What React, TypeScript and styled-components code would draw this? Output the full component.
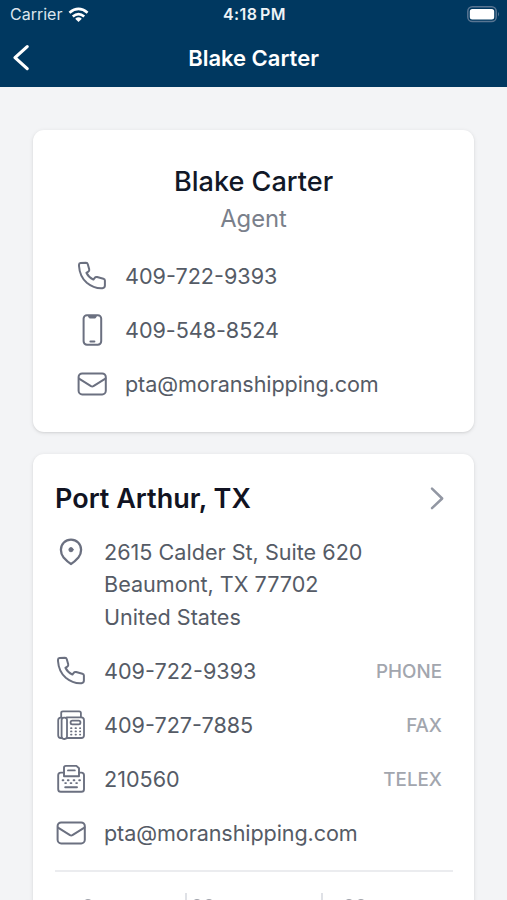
import React from "react";
import styled, { createGlobalStyle } from "styled-components";

const GlobalStyle = createGlobalStyle`
  * { box-sizing: border-box; }
  body { margin: 0; background: #f3f4f6; overflow: hidden; font-family: Inter, sans-serif; }
  svg { display: block; }
`;

const Screen = styled.div`
  width: 507px;
  height: 900px;
  overflow: hidden;
  background: #f3f4f6;
`;

const Header = styled.header`
  height: 87px;
  background: #003860;
  color: #fff;
`;

const StatusBar = styled.div`
  height: 29px;
  padding: 0 7px 0 10px;
  display: grid;
  grid-template-columns: 1fr auto 1fr;
  align-items: center;
  font-size: 16px;
  line-height: 29px;
`;

const Carrier = styled.div`
  display: flex;
  align-items: center;
  gap: 6px;
  color: #dbe5ed;
`;

const Clock = styled.div`
  font-weight: 600;
  font-size: 16px;
  letter-spacing: 0.35px;
  word-spacing: -1.5px;
  color: #eef3f7;
  padding-right: 1px;
`;

const BatterySlot = styled.div`
  justify-self: end;
`;

const NavBar = styled.div`
  height: 57px;
  padding: 0 12px;
  display: grid;
  grid-template-columns: 40px 1fr 40px;
  align-items: center;
`;

const NavTitle = styled.div`
  text-align: center;
  font-size: 22px;
  font-weight: 600;
`;

const Content = styled.main`
  padding: 43px 33px 0 33px;
  display: flex;
  flex-direction: column;
  gap: 22px;
`;

const Card = styled.section`
  background: #fff;
  border-radius: 11px;
  box-shadow: 0 1px 4px rgba(0, 0, 0, 0.1), 0 1px 2px rgba(0, 0, 0, 0.06);
`;

const ProfileCard = styled(Card)`
  height: 302px;
  padding: 33px 43px 0;
`;

const OfficeCard = styled(Card)`
  height: 500px;
  padding: 22px 21px 0 22px;
`;

const PersonName = styled.h1`
  margin: 0;
  text-align: center;
  font-size: 27.1px;
  font-weight: 500;
  line-height: 38px;
  color: #111827;
`;

const Role = styled.div`
  text-align: center;
  font-size: 23.8px;
  line-height: 36px;
  color: #7a808b;
`;

const ProfileRows = styled.div`
  padding-top: 12px;
`;

const Row = styled.div`
  display: flex;
  align-items: center;
  height: 54px;
  padding-right: 11px;
`;

const AddressRow = styled(Row)`
  align-items: flex-start;
  height: 108px;
`;

const IconSlot = styled.div`
  width: 49px;
  flex: none;
  color: #6b7080;
`;

const Value = styled.div<{ $spacing?: string }>`
  flex: 1;
  font-size: 21.6px;
  line-height: 32.4px;
  letter-spacing: ${(p) => p.$spacing ?? "0"};
  color: #555b66;
`;

const Kind = styled.div`
  font-size: 18.8px;
  font-weight: 500;
  color: #a2a6ae;
`;

const OfficeHeading = styled.div`
  display: flex;
  align-items: center;
  justify-content: space-between;
  height: 44px;
  padding-right: 8px;
  margin-bottom: 16px;
  color: #9297a3;
`;

const OfficeTitle = styled.h2`
  margin: 0;
  font-size: 27px;
  font-weight: 600;
  color: #111322;
`;

const Actions = styled.div`
  display: grid;
  grid-template-columns: 130px 136px 1fr;
  margin-top: 10px;
  border-top: 2px solid #ebecef;
  padding-top: 21px;
`;

const Action = styled.div<{ $inset: number }>`
  height: 40px;
  padding: 6px 0 0 ${(p) => p.$inset}px;
  color: #a0a3ab;
  & + & { border-left: 2px solid #dfe1e6; }
`;

const line = {
  fill: "none",
  stroke: "currentColor",
  strokeWidth: 2,
  strokeLinecap: "round" as const,
  strokeLinejoin: "round" as const,
};

const PhoneIcon = () => (
  <svg width="32" height="32" viewBox="0 0 32 32" {...line}>
    <path d="M3 4.8Q3 3.2 4.6 3L10 2.8Q11.4 2.8 11.8 4.2L13.2 9.3Q13.6 10.8 12.3 11.6L10.4 12.8Q12.6 17.4 17.4 19.6L18.7 17.9Q19.6 16.6 21.1 17L27.4 18.7Q28.9 19.1 28.9 20.6V25.6Q28.9 28 26.4 28.3Q18 28.8 10.8 22.8Q3.7 16.6 3 6Z" />
  </svg>
);

const MobileIcon = () => (
  <svg width="32" height="32" viewBox="0 0 32 32" {...line}>
    <rect x="7.6" y="1.2" width="17.6" height="29.5" rx="3.4" />
    <path d="M12.4 2L13.4 4H19.4L20.4 2" fill="currentColor" strokeWidth="1" />
    <path d="M14.4 27.5H18.4" />
  </svg>
);

const MailIcon = () => (
  <svg width="32" height="32" viewBox="0 0 32 32" {...line}>
    <rect x="2.6" y="5.4" width="27.2" height="21" rx="3.6" />
    <path d="M3 10.6L15 18.2Q16.2 18.9 17.4 18.2L29.4 10.6" />
  </svg>
);

const PinIcon = () => (
  <svg width="32" height="32" viewBox="0 0 32 32" {...line} strokeWidth={2.3}>
    <path d="M16 28Q12.8 26.2 8.6 21.5Q5.9 18.1 5.9 13.7A10.1 10.1 0 0 1 26.1 13.7Q26.1 18.1 23.4 21.5Q19.2 26.2 16 28Z" />
    <circle cx="16" cy="13.7" r="2.1" fill="currentColor" strokeWidth="1" />
  </svg>
);

const FaxIcon = () => (
  <svg width="32" height="32" viewBox="0 0 32 32" {...line} strokeWidth={1.8}>
    <path d="M6.2 8V4Q6.2 2.3 7.9 2.3H24.2Q25.9 2.3 25.9 4V8" />
    <path d="M11.5 8.4H26.2Q29 8.4 29 11.2V26.2Q29 29 26.2 29H11.5" />
    <path d="M7 8.6H5.8Q3.2 8.6 3.2 11.2V26.2Q3.2 29 5.8 29H7" />
    <rect x="6.6" y="8.6" width="5.4" height="21.4" rx="2.4" />
    <rect x="15.6" y="11.6" width="9.8" height="3.8" rx="1.6" />
    <path d="M16 19.2h.5M20.5 19.2h.5M25 19.2h.2M16 22.4h.5M20.5 22.4h.5M25 22.4h.2M16 25.6h.5M20.5 25.6h.5M25 25.6h.2" />
  </svg>
);

const TelexIcon = () => (
  <svg width="32" height="32" viewBox="0 0 32 32" {...line} strokeWidth={1.9}>
    <path d="M9 13.2V4.8Q9 2.9 10.9 2.9H21.4L24 5.2V13.2Z" />
    <path d="M13 7.4H19.8" />
    <path d="M9 9.6H5.8Q3.2 9.6 3.2 12.2V26.2Q3.2 28.8 5.8 28.8H26.4Q29 28.8 29 26.2V12.2Q29 9.6 26.4 9.6H24" />
    <path d="M7.6 17.2h.8M12.8 17.2h.8M18.6 17.2h.8M24.2 17.2h.8M10.2 20.1h.8M15.6 20.1h.8M21.2 20.1h.8M10.2 24.2H22" />
  </svg>
);

const BackIcon = () => (
  <svg width="20" height="30" viewBox="0 0 20 30" {...line} strokeWidth={3.2}>
    <path d="M15.2 3.6L3 14.6L15.2 25.6" />
  </svg>
);

const ForwardIcon = () => (
  <svg width="16" height="26" viewBox="0 0 16 26" {...line} strokeWidth={2.5}>
    <path d="M3 3.7L13.2 13.5L3 23.2" />
  </svg>
);

const WifiIcon = () => (
  <svg width="21" height="16" viewBox="0 0 22 16" fill="none" stroke="#fff" strokeWidth="2.8">
    <path d="M1.5 5.7Q11-2.3 20.5 5.7M5 9.5Q11 4.5 17 9.5" />
    <path d="M7.5 12Q11 8.9 14.5 12L11 15.3Z" fill="#fff" stroke="none" />
  </svg>
);

const BatteryIcon = () => (
  <svg width="33" height="17" viewBox="0 0 33 17">
    <rect x="0.8" y="0.8" width="28.4" height="14.8" rx="4.6" fill="none" stroke="#587592" strokeWidth="1.5" />
    <rect x="2.8" y="3" width="24.4" height="10.5" rx="2.5" fill="#fff" />
    <path d="M31 6Q33 8.2 31 10.4Z" fill="#587592" />
  </svg>
);

const PersonIcon = () => (
  <svg width="24" height="24" viewBox="0 0 24 24" {...line}>
    <circle cx="12" cy="5" r="4" />
    <path d="M4 23v-4q0-4 4-4h8q4 0 4 4v4" />
  </svg>
);

const PairIcon = () => (
  <svg width="24" height="24" viewBox="0 0 24 24" {...line}>
    <circle cx="6" cy="5" r="4" />
    <circle cx="18" cy="5" r="4" />
    <path d="M2 20v-5h8v5M14 20v-5h8v5" />
  </svg>
);

const contacts = [
  { icon: <PhoneIcon />, value: "409-722-9393", kind: "PHONE" },
  { icon: <FaxIcon />, value: "409-727-7885", kind: "FAX" },
  { icon: <TelexIcon />, value: "210560", kind: "TELEX" },
  { icon: <MailIcon />, value: "pta@moranshipping.com", kind: "" },
];

export default function App() {
  return (
    <Screen>
      <GlobalStyle />
      <Header>
        <StatusBar>
          <Carrier>Carrier <WifiIcon /></Carrier>
          <Clock>4:18 PM</Clock>
          <BatterySlot><BatteryIcon /></BatterySlot>
        </StatusBar>
        <NavBar>
          <BackIcon />
          <NavTitle>Blake Carter</NavTitle>
        </NavBar>
      </Header>
      <Content>
        <ProfileCard>
          <PersonName>Blake Carter</PersonName>
          <Role>Agent</Role>
          <ProfileRows>
            <Row><IconSlot><PhoneIcon /></IconSlot><Value>409-722-9393</Value></Row>
            <Row><IconSlot><MobileIcon /></IconSlot><Value $spacing="-0.05px">409-548-8524</Value></Row>
            <Row><IconSlot><MailIcon /></IconSlot><Value $spacing="-0.1px">pta@moranshipping.com</Value></Row>
          </ProfileRows>
        </ProfileCard>
        <OfficeCard>
          <OfficeHeading>
            <OfficeTitle>Port Arthur, TX</OfficeTitle>
            <ForwardIcon />
          </OfficeHeading>
          <AddressRow>
            <IconSlot><PinIcon /></IconSlot>
            <Value>2615 Calder St, Suite 620<br />Beaumont, TX 77702<br />United States</Value>
          </AddressRow>
          {contacts.map((c) => (
            <Row key={c.value}>
              <IconSlot>{c.icon}</IconSlot>
              <Value $spacing={c.kind ? "0" : "-0.1px"}>{c.value}</Value>
              {c.kind && <Kind>{c.kind}</Kind>}
            </Row>
          ))}
          <Actions>
            <Action $inset={21}><PersonIcon /></Action>
            <Action $inset={4}><PairIcon /></Action>
            <Action $inset={20}><PairIcon /></Action>
          </Actions>
        </OfficeCard>
      </Content>
    </Screen>
  );
}
